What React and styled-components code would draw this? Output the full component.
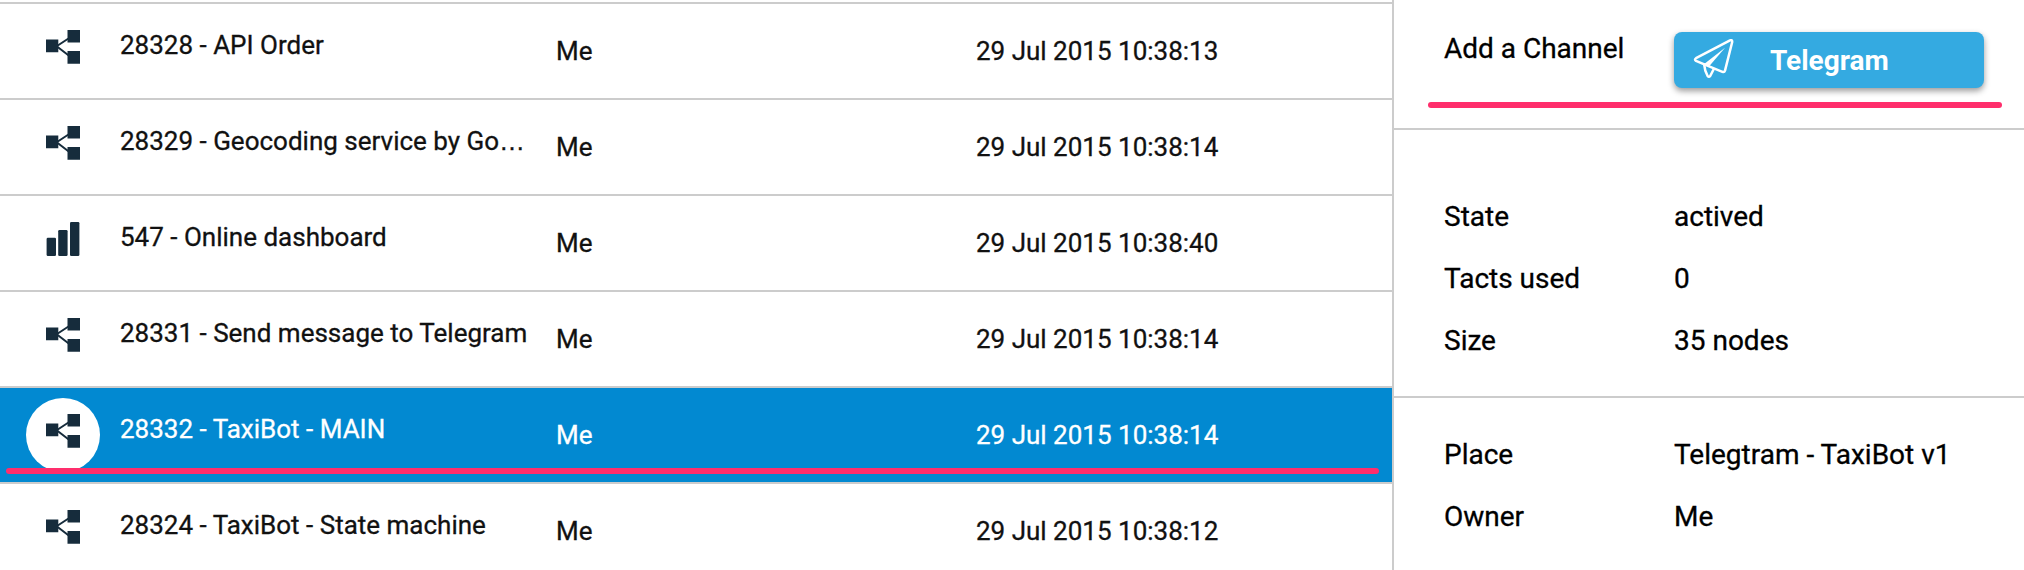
import React from "react";
import styled, { createGlobalStyle } from "styled-components";

const GlobalStyle = createGlobalStyle`
  *, *::before, *::after { box-sizing: border-box; }
  body {
    margin: 0;
    background: #fff;
    font-family: Roboto, "Liberation Sans", sans-serif;
    -webkit-text-stroke: 0.3px currentColor;
    overflow: hidden;
  }
`;

const Page = styled.div`
  display: flex;
  width: 2024px;
  height: 570px;
  overflow: hidden;
`;

const List = styled.main`
  width: 1392px;
  height: 100%;
  flex: none;
  padding-top: 2px;
  overflow: hidden;
`;

const Row = styled.div`
  position: relative;
  display: grid;
  grid-template-columns: 94px 436px 420px 1fr;
  align-items: center;
  height: 96px;
  padding-left: 26px;
  border-top: 2px solid #ccc;
  font-size: 26px;
  line-height: 32px;
  white-space: nowrap;
  color: ${(p) => (p.$selected ? "#fff" : "#111")};
  background: ${(p) => (p.$selected ? "#0289d1" : "#fff")};
`;

const IconCircle = styled.div`
  display: flex;
  justify-content: center;
  width: 74px;
  height: 74px;
  padding-top: 16px;
  border-radius: 50%;
  background: ${(p) => (p.$selected ? "#fff" : "transparent")};

  svg { display: block; }
`;

const Name = styled.span`
  padding-bottom: 12px;
`;

const Ellipsis = styled.span`
  font-family: "Liberation Sans", sans-serif;
  line-height: 1;
`;

const Cell = styled.span``;

const Marker = styled.div`
  height: ${(p) => p.$thickness}px;
  border-radius: 3px;
  background: #ff2e6c;
`;

const RowMarker = styled(Marker)`
  position: absolute;
  left: 6px;
  right: 13px;
  bottom: 8px;
`;

const Details = styled.aside`
  flex: 1;
  height: 100%;
  border-left: 2px solid #ccc;
  font-size: 28px;
  line-height: 32px;
  color: #000;
`;

const Section = styled.section`
  display: flex;
  flex-direction: column;
  gap: 30px;
  height: ${(p) => p.$height}px;
  padding: ${(p) => p.$top}px 40px 0 50px;
  border-bottom: ${(p) => (p.$last ? "none" : "2px solid #ccc")};
`;

const ChannelSection = styled.section`
  height: 130px;
  padding: 32px 22px 0 34px;
  border-bottom: 2px solid #ccc;
`;

const Field = styled.div`
  display: grid;
  grid-template-columns: 230px 1fr;
  white-space: nowrap;
`;

const ChannelField = styled(Field)`
  align-items: start;
  padding: 0 18px 14px 16px;
`;

const ChannelLabel = styled.span`
  padding-top: 1px;
`;

const TelegramButton = styled.button`
  display: flex;
  align-items: center;
  width: 310px;
  height: 56px;
  padding: 0 0 0 19px;
  border: 0;
  border-radius: 8px;
  background: #34aae1;
  box-shadow: 0 3px 6px rgba(0, 0, 0, 0.4);
  color: #fff;
  font: 700 28px/32px Roboto, "Liberation Sans", sans-serif;
  -webkit-text-stroke: 0;

  svg { flex: none; margin-right: 35px; }
`;

const ButtonLabel = styled.span`
  padding-top: 1px;
`;

function FlowIcon() {
  return (
    <svg width="34" height="34" viewBox="0 0 34 34">
      <path d="M11 16 L24 7.5 M11 16.5 L24 26.5" stroke="#162c3c" strokeWidth="2" fill="none" />
      <path d="M0 9.5h12.3v12.8H0z M21.5 0H34v12.6H21.5z M21.5 21H34v12.7H21.5z" fill="#162c3c" />
    </svg>
  );
}

function ChartIcon() {
  return (
    <svg width="34" height="34" viewBox="0 0 34 34" fill="#162c3c">
      <rect x="0.6" y="15.7" width="9.4" height="18.3" rx="1.3" />
      <rect x="12.2" y="8" width="9.4" height="26" rx="1.3" />
      <rect x="24" y="0" width="9.4" height="34" rx="1.3" />
    </svg>
  );
}

function PlaneIcon() {
  return (
    <svg width="42" height="42" viewBox="0 0 42 42" fill="none" stroke="#fff" strokeWidth="2.5" strokeLinejoin="round" strokeLinecap="round">
      <path d="M37 1.4 L3 19.2 Q1 20.6 3 21.9 L12.5 25.8 L29.4 32.8 Q31.4 33.4 32 31.6 L39.2 3 Q39.4 0.5 37 1.4 Z" />
      <path d="M11.2 25.6 Q11.6 31.5 14.6 37 Q15.9 38.6 17.2 37 L20.8 30" />
      <path d="M32 8.7 L11.2 25 L16.2 27.2 Z" fill="#fff" stroke="none" />
    </svg>
  );
}

const rows = [
  { name: "28328 - API Order", date: "29 Jul 2015 10:38:13" },
  { name: "28329 - Geocoding service by Go", date: "29 Jul 2015 10:38:14", clipped: true },
  { name: "547 - Online dashboard", date: "29 Jul 2015 10:38:40", chart: true },
  { name: "28331 - Send message to Telegram", date: "29 Jul 2015 10:38:14" },
  { name: "28332 - TaxiBot - MAIN", date: "29 Jul 2015 10:38:14", selected: true },
  { name: "28324 - TaxiBot - State machine", date: "29 Jul 2015 10:38:12" },
];

export default function App() {
  return (
    <>
      <GlobalStyle />
      <Page>
        <List>
          {rows.map((row) => (
            <Row key={row.name} $selected={row.selected}>
              <IconCircle $selected={row.selected}>{row.chart ? <ChartIcon /> : <FlowIcon />}</IconCircle>
              <Name>{row.name}{row.clipped && <Ellipsis>…</Ellipsis>}</Name>
              <Cell>Me</Cell>
              <Cell>{row.date}</Cell>
              {row.selected && <RowMarker $thickness={6} />}
            </Row>
          ))}
        </List>
        <Details>
          <ChannelSection>
            <ChannelField>
              <ChannelLabel>Add a Channel</ChannelLabel>
              <TelegramButton>
                <PlaneIcon />
                <ButtonLabel>Telegram</ButtonLabel>
              </TelegramButton>
            </ChannelField>
            <Marker $thickness={6} />
          </ChannelSection>
          <Section $height={268} $top={71}>
            <Field><span>State</span><span>actived</span></Field>
            <Field><span>Tacts used</span><span>0</span></Field>
            <Field><span>Size</span><span>35 nodes</span></Field>
          </Section>
          <Section $height={172} $top={41} $last>
            <Field><span>Place</span><span>Telegtram - TaxiBot v1</span></Field>
            <Field><span>Owner</span><span>Me</span></Field>
          </Section>
        </Details>
      </Page>
    </>
  );
}
